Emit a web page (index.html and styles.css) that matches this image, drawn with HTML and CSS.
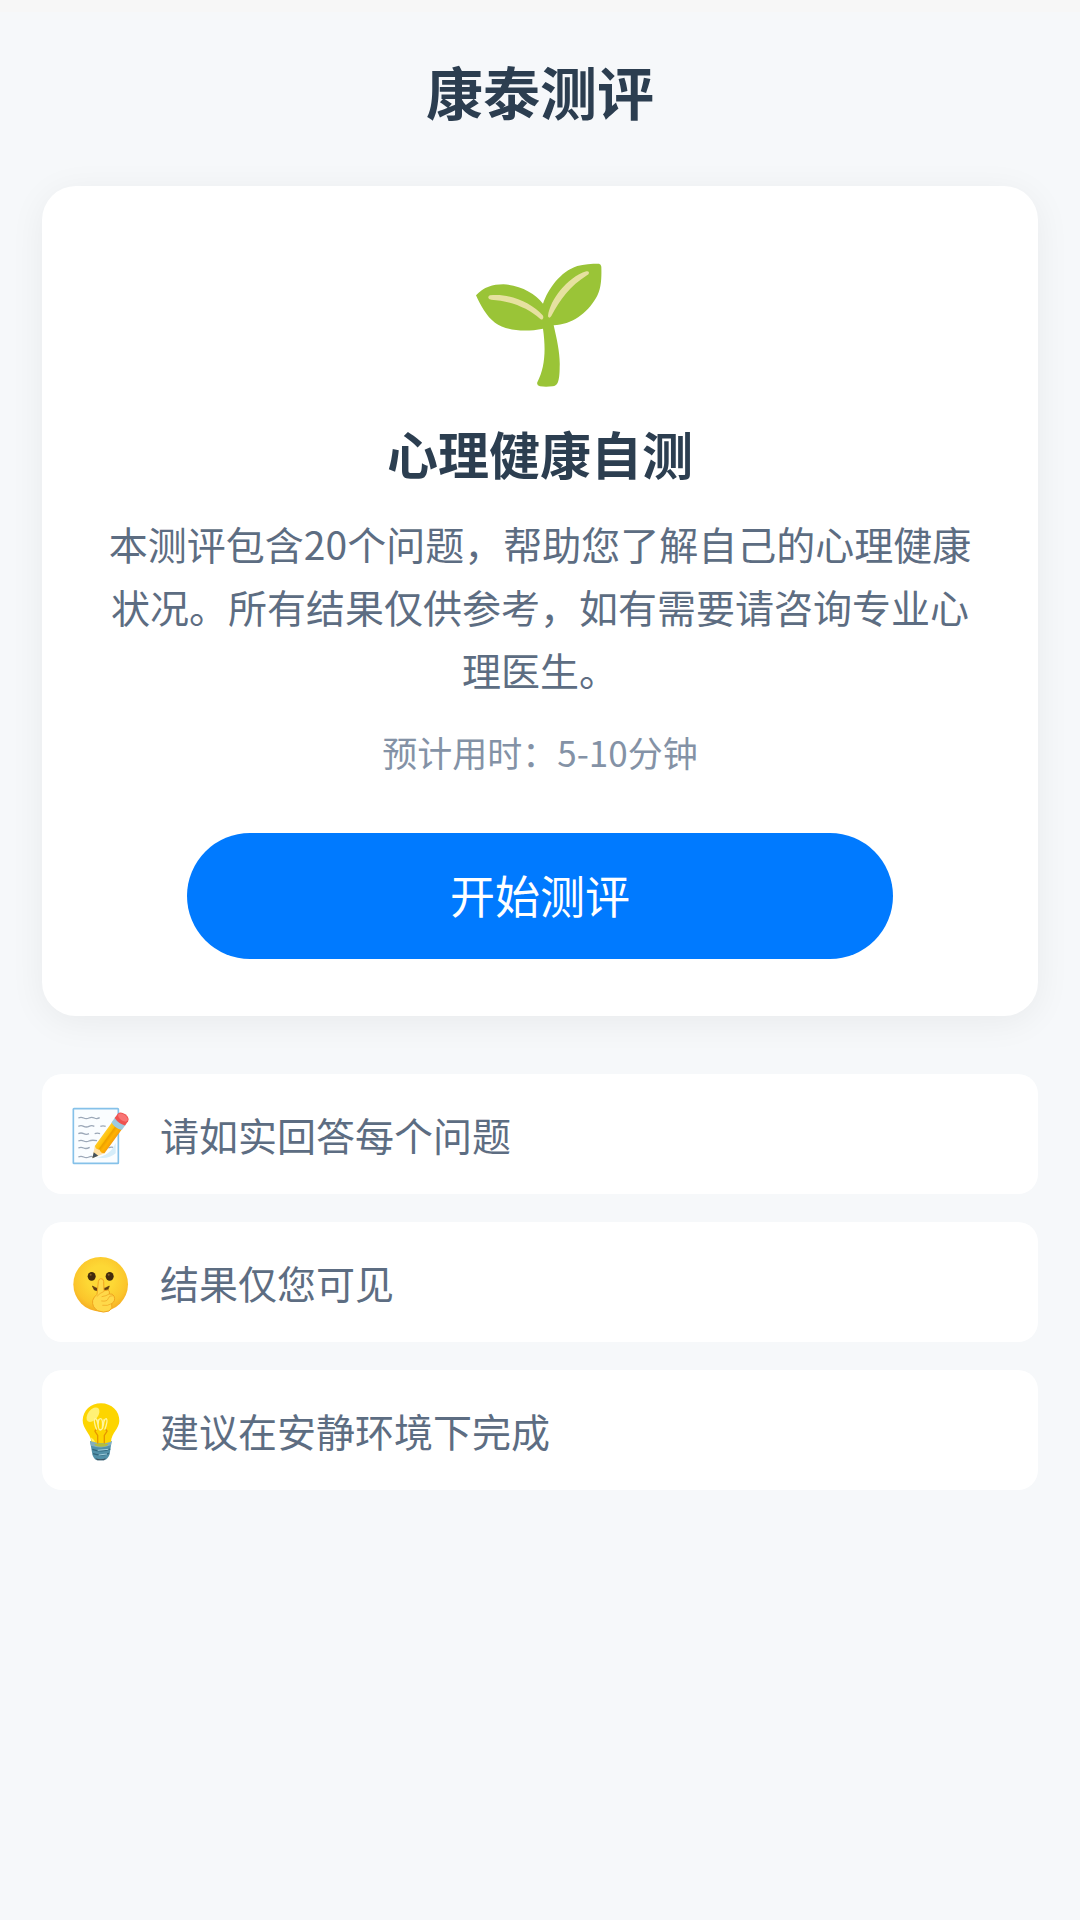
FILE: index.html
```html
<!DOCTYPE html>
<html lang="zh-CN">
<head>
<meta charset="utf-8">
<meta name="viewport" content="width=device-width, initial-scale=1">
<title>康泰测评</title>
<link rel="stylesheet" href="styles.css">
</head>
<body>
<div class="page">
  <header class="header">
    <h1 class="title">康泰测评</h1>
  </header>
  <main>
    <section class="card">
      <svg class="seedling" viewBox="24 24 432 405" aria-hidden="true">
        <path fill="#9ac437" d="M48 136C72 111 98 103 130 103C180 105 225 130 249 161C264 118 300 65 352 48C372 42 394 41 417 41Q423 42 424 50C425 85 424 118 408 144C381 190 335 224 281 226C291 270 301 312 299 352C299 372 297 390 293 398Q288 408 278 409C264 411 252 411 240 409Q229 405 232 397C255 352 258 300 249 236C190 248 135 240 105 218C80 200 61 165 48 136Z"/>
        <path fill="#e6e1a0" d="M90 136C150 129 215 158 248 196Q252 202 248 207Q246 211 240 206C205 174 150 152 94 149Q84 148 85 142Q85 137 90 136Z"/>
        <path fill="#e6e1a0" d="M264 198C270 150 320 83 379 64Q387 62 387 68Q387 73 381 76C330 108 300 150 274 198Q269 205 266 202Q264 201 264 198Z"/>
      </svg>
      <h2 class="card-title">心理健康自测</h2>
      <p class="card-text">本测评包含20个问题，帮助您了解自己的心理健康状况。所有结果仅供参考，如有需要请咨询专业心理医生。</p>
      <p class="card-time">预计用时：5-10分钟</p>
      <button class="start" type="button">开始测评</button>
    </section>
    <ul class="tips">
      <li class="tip">
        <svg class="tip-icon" viewBox="24 36 192 192" aria-hidden="true">
          <defs>
            <linearGradient id="pencil" x1="0" x2="1"><stop offset="0" stop-color="#ffca28"/><stop offset=".35" stop-color="#ffc107"/><stop offset=".45" stop-color="#eca000"/><stop offset=".7" stop-color="#ffb300"/><stop offset="1" stop-color="#f59e0b"/></linearGradient>
          </defs>
          <rect x="40" y="56" width="135" height="164" rx="2" fill="#fafdff" stroke="#85c1e9" stroke-width="5"/>
          <path d="M108 202Q150 198 167 158V190Q145 210 108 202Z" fill="#d6edf9"/>
          <path d="M55 84q8-4 16 0t16 0t16 0t16-1M55 109q8-4 16 0t16 0t16 0M121 109q8-3 16 0M55 131q8-4 16 0t16 0M104 131q8-3 16 0M55 153q8-4 16 0t16 0t24-1M55 174q8-4 16 0t18-2M145 174q8-4 14-2M55 201q8-4 16 0t16 0t14 1" fill="none" stroke="#9ca8b8" stroke-width="4"/>
          <g transform="translate(97 205) rotate(36) scale(1.2 1)">
            <path d="M0 0L-13-34H17Z" fill="#ffe0a3"/>
            <path d="M0 0L-6-17H8Z" fill="#45525b"/>
            <path d="M-13-34V-124H17V-34Q9-27 2-34Q-5-27-13-34Z" fill="url(#pencil)"/>
            <path d="M-14-121V-141H18V-121Q2-112-14-121Z" fill="#9dcbe0"/>
            <path d="M-14-137V-153Q-13-164 2-165Q17-164 18-153V-137Q2-130-14-137Z" fill="#ef5350"/>
            <ellipse cx="2" cy="-153" rx="14" ry="9" fill="#f87575"/>
          </g>
        </svg>
        <span>请如实回答每个问题</span>
      </li>
      <li class="tip">
        <svg class="tip-icon" viewBox="24 30 192 192" aria-hidden="true">
          <defs>
            <radialGradient id="face" cx=".5" cy=".4" r=".6"><stop offset=".4" stop-color="#fdd835"/><stop offset=".8" stop-color="#fbc52b"/><stop offset="1" stop-color="#f5ad24"/></radialGradient>
          </defs>
          <circle cx="122" cy="133" r="82" fill="url(#face)"/>
          <ellipse cx="95" cy="109" rx="12" ry="13" fill="#422b0d"/>
          <ellipse cx="149" cy="109" rx="12" ry="13" fill="#422b0d"/>
          <circle cx="92" cy="104" r="3" fill="#896024"/>
          <circle cx="146" cy="104" r="3" fill="#896024"/>
          <path d="M97 138Q108 146 121 146Q137 146 148 138L143 151Q123 158 103 150Z" fill="#603d12" stroke="#603d12" stroke-width="2"/>
          <path d="M122 116Q130 115 131 124L132 152L143 150Q151 152 148 162Q158 160 162 168Q168 183 155 191Q160 205 147 213Q130 220 113 212Q95 201 98 181Q102 170 111 163L115 125Q116 117 122 116Z" fill="#ffd94a" stroke="#f0a51e" stroke-width="3"/>
          <path d="M111 169Q119 159 132 154M126 170Q139 168 148 162M125 183Q142 186 145 175Q147 166 158 167M128 196Q142 199 155 191" fill="none" stroke="#eda01d" stroke-width="2" stroke-linecap="round"/>
        </svg>
        <span>结果仅您可见</span>
      </li>
      <li class="tip">
        <svg class="tip-icon" viewBox="24 39 192 192" aria-hidden="true">
          <path d="M90 168H155L149 207Q145 222 132 226H111Q100 222 97 208Z" fill="#5190a8"/>
          <path d="M90 168H155L153 181Q124 193 93 182Z" fill="#82aebf"/>
          <path d="M97 193Q125 203 151 192M99 206Q124 215 147 205" fill="none" stroke="#32677d" stroke-width="4"/>
          <path d="M113 196L145 193M116 210L141 207" stroke="#a1d0df" stroke-width="3"/>
          <path d="M106 219Q122 227 138 219L132 226H112Z" fill="#3f5260"/>
          <path d="M123 55C155 55 179 79 178 108C177 132 155 143 153 170Q124 180 94 169C91 145 68 132 68 106C69 77 92 55 123 55Z" fill="#fdd500"/>
          <path d="M92 157Q99 161 106 170L96 169Z" fill="#fff176"/>
          <ellipse cx="99" cy="89" rx="15" ry="25" transform="rotate(38 99 89)" fill="#fff176"/>
          <path d="M113 176V151L105 139Q105 134 112 133M133 176V151L141 139Q141 134 134 133" fill="none" stroke="#e59600" stroke-width="4"/>
          <path d="M110 134Q99 106 105 101Q111 98 115 126Q113 101 121 101Q130 100 127 132Q132 99 139 101Q145 106 134 134M115 103Q112 133 121 135Q131 134 132 103" fill="none" stroke="#fff59d" stroke-width="4"/>
          <path d="M103 178Q124 171 145 178Q143 185 124 185Q104 185 103 178Z" fill="#b5bd3c"/>
        </svg>
        <span>建议在安静环境下完成</span>
      </li>
    </ul>
  </main>
</div>
</body>
</html>
```
FILE: styles.css
```css
* {
  box-sizing: border-box;
  margin: 0;
  padding: 0;
}

body {
  background: #f6f8fa;
  color: #5d6d82;
  font-family: "Noto Sans CJK SC", sans-serif;
}

.page {
  min-height: 100vh;
  padding: 38px 42px 54px;
  border-top: 12px solid #f7f7f7;
}

.header {
  margin-bottom: 56px;
  text-align: center;
}

.title {
  color: #2c3e50;
  font-size: 57px;
  font-weight: 700;
  line-height: 80px;
}

.card {
  display: flex;
  flex-direction: column;
  align-items: center;
  padding: 72px 58px 57px;
  border-radius: 34px;
  background: #fff;
  box-shadow: 0 6px 36px rgba(0, 0, 0, 0.06);
  text-align: center;
}

.seedling {
  width: 144px;
  height: 135px;
  margin-bottom: 23px;
}

.card-title {
  margin-bottom: 22px;
  color: #2c3e50;
  font-size: 51px;
  font-weight: 700;
  line-height: 74px;
}

.card-text {
  margin-bottom: 26px;
  font-size: 39px;
  line-height: 63px;
}

.card-time {
  margin-bottom: 56px;
  color: #8492a6;
  font-size: 35px;
  line-height: 50px;
}

.start {
  width: 100%;
  max-width: 706px;
  height: 126px;
  padding-bottom: 3px;
  border: 0;
  border-radius: 63px;
  background: #007aff;
  color: #fff;
  font-family: inherit;
  font-size: 45px;
}

.tips {
  display: flex;
  flex-direction: column;
  gap: 28px;
  margin-top: 58px;
  list-style: none;
}

.tip {
  display: flex;
  align-items: center;
  gap: 28px;
  padding: 28px 26px;
  border-radius: 20px;
  background: #fff;
  font-size: 39px;
  line-height: 60px;
}

.tip-icon {
  flex: none;
  width: 64px;
  height: 64px;
}
```
